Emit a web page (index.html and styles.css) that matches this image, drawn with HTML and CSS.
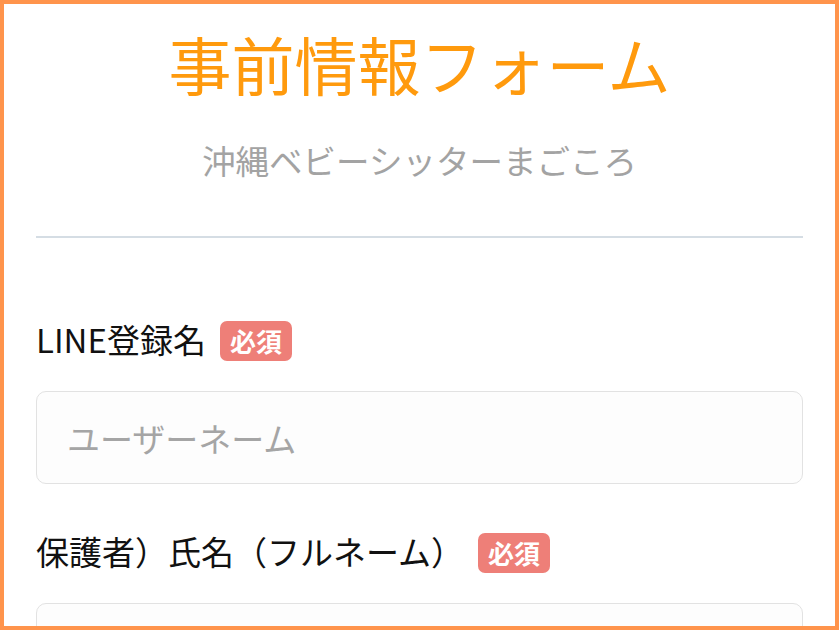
FILE: index.html
```html
<!DOCTYPE html>
<html lang="ja">
  <head>
    <meta charset="utf-8">
    <title>事前情報フォーム</title>
    <link rel="stylesheet" href="styles.css">
  </head>
  <body>
    <div id="form-frame">
      <div id="form-header">
        <h1 id="form-title">事前情報フォーム</h1>
        <p id="form-subtitle">沖縄ベビーシッターまごころ</p>
      </div>

      <hr id="form-divider">

      <div class="form-field">
        <label class="field-label" for="line-name">LINE登録名<span class="required-badge">必須</span></label>
        <input class="field-input" id="line-name" type="text" placeholder="ユーザーネーム">
      </div>

      <div class="form-field">
        <label class="field-label" for="parent-name">保護者）氏名（フルネーム）<span class="required-badge">必須</span></label>
        <input class="field-input" id="parent-name" type="text">
      </div>
    </div>
  </body>
</html>
```

FILE: styles.css
```css
body {
  margin: 0;
  padding: 0;
  background-color: #ffffff;
  font-family: "Noto Sans CJK JP", "Noto Sans", sans-serif;
}
#form-frame {
  box-sizing: border-box;
  height: 630px;
  border: 4px solid #ff944c;
  padding: 0 32px;
  overflow: hidden;
}
#form-header {
  text-align: center;
  padding-top: 14px;
}
#form-title {
  margin: 0;
  font-size: 63px;
  font-weight: 400;
  line-height: 90px;
  color: #ff9a0d;
}
#form-subtitle {
  margin: 28px 0 0 0;
  font-size: 33.5px;
  line-height: 48px;
  color: #a3a3a3;
}
#form-divider {
  margin: 52px 0 0 0;
  border: none;
  height: 2px;
  background-color: #d5dde4;
}
.form-field {
  margin-top: 79px;
}
.form-field + .form-field {
  margin-top: 45px;
}
.field-label {
  display: flex;
  align-items: center;
  font-size: 33px;
  line-height: 44px;
  color: #111111;
}
.required-badge {
  margin-left: 14px;
  margin-top: 3px;
  padding: 0 10px;
  height: 40px;
  line-height: 40px;
  border-radius: 7px;
  background-color: #ee7f78;
  color: #ffffff;
  font-size: 26px;
  font-weight: 700;
}
.field-input {
  display: block;
  box-sizing: border-box;
  width: 100%;
  height: 93px;
  margin-top: 30px;
  padding: 0 30px;
  border: 1.5px solid #e2e2e2;
  border-radius: 10px;
  background-color: #fdfdfd;
  font-family: inherit;
  font-size: 33px;
  color: #333333;
}
.field-input::placeholder {
  color: #a5a5a5;
}
```
